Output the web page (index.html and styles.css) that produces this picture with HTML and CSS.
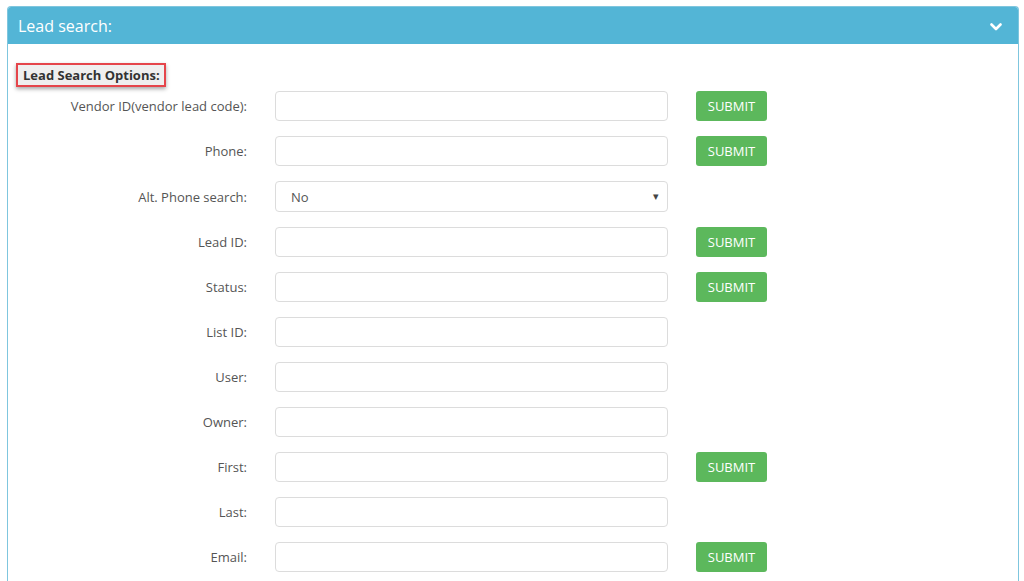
FILE: index.html
```html
<!DOCTYPE html>
<html lang="en">

<head>
    <meta charset="UTF-8">
    <meta name="viewport" content="width=device-width, initial-scale=1.0">
    <title>Lead search</title>
    <link rel="stylesheet" href="styles.css">
</head>

<body>
    <div class="panel">
        <div class="panel-heading">
            <h3>Lead search:</h3>
            <svg class="chevron" width="12" height="8" viewBox="0 0 12 8">
                <path d="M1.5 1.5 L6 6 L10.5 1.5" fill="none" stroke="#fff" stroke-width="2.6" stroke-linecap="round" stroke-linejoin="round"/>
            </svg>
        </div>
        <div class="panel-body">
            <div class="options-title"><span>Lead Search Options:</span></div>
            <form class="search-form">
                <label for="vendor-id">Vendor ID(vendor lead code):</label>
                <input type="text" id="vendor-id">
                <button type="button">SUBMIT</button>

                <label for="phone">Phone:</label>
                <input type="text" id="phone">
                <button type="button">SUBMIT</button>

                <label for="alt-phone">Alt. Phone search:</label>
                <div class="select-box" id="alt-phone">
                    <span>No</span>
                    <span class="caret">&#9662;</span>
                </div>
                <span></span>

                <label for="lead-id">Lead ID:</label>
                <input type="text" id="lead-id">
                <button type="button">SUBMIT</button>

                <label for="status">Status:</label>
                <input type="text" id="status">
                <button type="button">SUBMIT</button>

                <label for="list-id">List ID:</label>
                <input type="text" id="list-id">
                <span></span>

                <label for="user">User:</label>
                <input type="text" id="user">
                <span></span>

                <label for="owner">Owner:</label>
                <input type="text" id="owner">
                <span></span>

                <label for="first">First:</label>
                <input type="text" id="first">
                <button type="button">SUBMIT</button>

                <label for="last">Last:</label>
                <input type="text" id="last">
                <span></span>

                <label for="email">Email:</label>
                <input type="text" id="email">
                <button type="button">SUBMIT</button>
            </form>
        </div>
    </div>
</body>

</html>
```

FILE: styles.css
```css
body {
    font-family: "Open Sans", Arial, sans-serif;
    margin: 0;
    background-color: #fff;
    overflow: hidden;
}

.panel {
    margin: 6px 5px 0 7px;
    border: 1px solid #7fc6de;
    border-bottom: none;
    border-radius: 4px 4px 0 0;
    height: 600px;
}

.panel-heading {
    background-color: #53b5d6;
    height: 37px;
    display: flex;
    align-items: center;
    justify-content: space-between;
    padding: 0 16px 0 10px;
    border-radius: 3px 3px 0 0;
}

.panel-heading h3 {
    margin: 0;
    color: #fff;
    font-size: 16px;
    font-weight: normal;
}

.chevron {
    margin-top: 2px;
}

.panel-body {
    padding: 19px 8px 0 8px;
}

.options-title span {
    display: inline-block;
    font-size: 13px;
    font-weight: bold;
    color: #333;
    background-color: #efefef;
    border: 2px solid #e5454b;
    padding: 0 4px 0 5px;
    line-height: 20px;
    box-shadow: 0 2px 4px rgba(0, 0, 0, 0.35);
}

.search-form {
    display: grid;
    grid-template-columns: 231px 393px 71px;
    column-gap: 28px;
    row-gap: 15px;
    align-items: center;
    margin-top: 4px;
}

.search-form label {
    text-align: right;
    font-size: 13px;
    color: #555;
}

.search-form input,
.select-box {
    height: 30px;
    box-sizing: border-box;
    border: 1px solid #dcdcdc;
    border-radius: 4px;
    padding: 6px 12px;
    font-family: inherit;
    font-size: 13px;
    color: #555;
    width: 100%;
}

.select-box {
    height: 31px;
    display: flex;
    align-items: center;
    justify-content: space-between;
    padding: 0 8px 0 15px;
}

.caret {
    font-size: 11px;
    color: #444;
    margin-top: -2px;
}

.search-form button {
    height: 30px;
    background-color: #5cb85c;
    color: #fff;
    border: none;
    border-radius: 3px;
    font-family: inherit;
    font-size: 13px;
    padding: 0;
    cursor: pointer;
}
```
